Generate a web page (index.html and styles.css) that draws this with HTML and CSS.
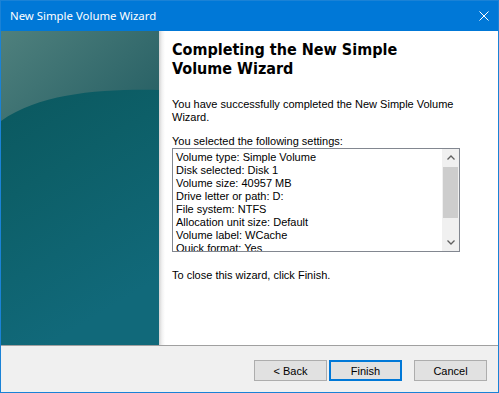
FILE: index.html
```html
<!DOCTYPE html>
<html lang="en">
<head>
    <meta charset="UTF-8">
    <title>New Simple Volume Wizard</title>
    <link rel="stylesheet" href="styles.css">
</head>
<body>
    <div class="window">
        <div class="titlebar">
            <span class="title">New Simple Volume Wizard</span>
            <svg class="close" width="10" height="10" viewBox="0 0 10 10">
                <path d="M0.5 0.5 L9.5 9.5 M9.5 0.5 L0.5 9.5" stroke="#fff" stroke-width="1" fill="none"/>
            </svg>
        </div>

        <div class="main">
            <div class="banner">
                <svg width="158" height="314" viewBox="0 0 158 314">
                    <defs>
                        <linearGradient id="lower" x1="0" y1="0" x2="0.3" y2="1">
                            <stop offset="0" stop-color="#09545a"/>
                            <stop offset="0.5" stop-color="#0d5f68"/>
                            <stop offset="1" stop-color="#11697a"/>
                        </linearGradient>
                        <linearGradient id="upper" x1="0" y1="0" x2="1" y2="0.6">
                            <stop offset="0" stop-color="#4f807d"/>
                            <stop offset="1" stop-color="#2b6367"/>
                        </linearGradient>
                    </defs>
                    <rect width="158" height="314" fill="url(#lower)"/>
                    <path d="M0 0 H158 V59 C100 58 40 62 0 90 Z" fill="url(#upper)"/>
                </svg>
            </div>

            <div class="content">
                <h1>Completing the New Simple<br>Volume Wizard</h1>
                <p class="intro">You have successfully completed the New Simple Volume<br>Wizard.</p>
                <p class="label">You selected the following settings:</p>

                <div class="listbox">
                    <div class="items">
                        <div>Volume type: Simple Volume</div>
                        <div>Disk selected: Disk 1</div>
                        <div>Volume size: 40957 MB</div>
                        <div>Drive letter or path: D:</div>
                        <div>File system: NTFS</div>
                        <div>Allocation unit size: Default</div>
                        <div>Volume label: WCache</div>
                        <div>Quick format: Yes</div>
                    </div>
                    <div class="scrollbar">
                        <div class="arrow">
                            <svg width="8" height="5" viewBox="0 0 8 5"><path d="M0.5 4.5 L4 1 L7.5 4.5" stroke="#606060" stroke-width="1.3" fill="none"/></svg>
                        </div>
                        <div class="track"><div class="thumb"></div></div>
                        <div class="arrow">
                            <svg width="8" height="5" viewBox="0 0 8 5"><path d="M0.5 0.5 L4 4 L7.5 0.5" stroke="#606060" stroke-width="1.3" fill="none"/></svg>
                        </div>
                    </div>
                </div>

                <p class="closing">To close this wizard, click Finish.</p>
            </div>
        </div>

        <div class="footer">
            <button class="back">&lt; Back</button>
            <button class="finish">Finish</button>
            <button class="cancel">Cancel</button>
        </div>
    </div>
</body>
</html>
```

FILE: styles.css
```css
body {
    margin: 0;
    font-family: "Liberation Sans", Arial, sans-serif;
    font-size: 11px;
}

.window {
    width: 499px;
    height: 393px;
    box-sizing: border-box;
    border: 1px solid #1a82d6;
    display: flex;
    flex-direction: column;
    background-color: #f0f0f0;
}

.titlebar {
    height: 30px;
    flex-shrink: 0;
    background-color: #0078d7;
    display: flex;
    align-items: center;
    justify-content: space-between;
    padding: 0 9px 0 9px;
    color: white;
    font-family: "Noto Sans", sans-serif;
    font-size: 11.4px;
}

.title {
    margin-top: -1px;
}

.close {
    display: block;
}

.main {
    height: 314px;
    flex-shrink: 0;
    display: flex;
    background-color: white;
}

.banner svg {
    display: block;
}

.content {
    flex: 1;
    padding: 9px 0 0 13px;
    background: linear-gradient(to right, #d3d3d3, #f2f2f2 3px, white 6px);
}

h1 {
    margin: 0;
    font-family: "DejaVu Sans Condensed", "DejaVu Sans", sans-serif;
    font-weight: bold;
    font-size: 16px;
    line-height: 19px;
    color: black;
}

p {
    margin: 0;
    line-height: 13px;
}

.intro {
    margin-top: 20px;
}

.label {
    margin-top: 11px;
}

.listbox {
    width: 288px;
    height: 104px;
    box-sizing: border-box;
    border: 1px solid #828790;
    display: flex;
    background-color: white;
}

.items {
    flex: 1;
    overflow: hidden;
    padding: 2px 0 0 3px;
    line-height: 13px;
    white-space: nowrap;
}

.scrollbar {
    width: 17px;
    display: flex;
    flex-direction: column;
    background-color: #f0f0f0;
}

.arrow {
    height: 17px;
    display: flex;
    align-items: center;
    justify-content: center;
}

.arrow svg {
    display: block;
}

.track {
    flex: 1;
    padding-top: 1px;
}

.thumb {
    height: 51px;
    margin: 0 1px;
    background-color: #cdcdcd;
}

.closing {
    margin-top: 17px;
}

.footer {
    flex: 1;
    border-top: 1px solid #a0a0a0;
    display: flex;
    justify-content: flex-end;
    align-items: flex-start;
    padding: 14px 11px 0 0;
}

.footer button {
    width: 73px;
    height: 21px;
    box-sizing: border-box;
    margin: 0;
    padding: 0;
    border: 1px solid #adadad;
    background-color: #e1e1e1;
    font-family: "Liberation Sans", Arial, sans-serif;
    font-size: 11px;
    color: black;
}

.footer .finish {
    margin-left: 2px;
    border: 2px solid #0078d7;
}

.footer .cancel {
    margin-left: 12px;
}
```
